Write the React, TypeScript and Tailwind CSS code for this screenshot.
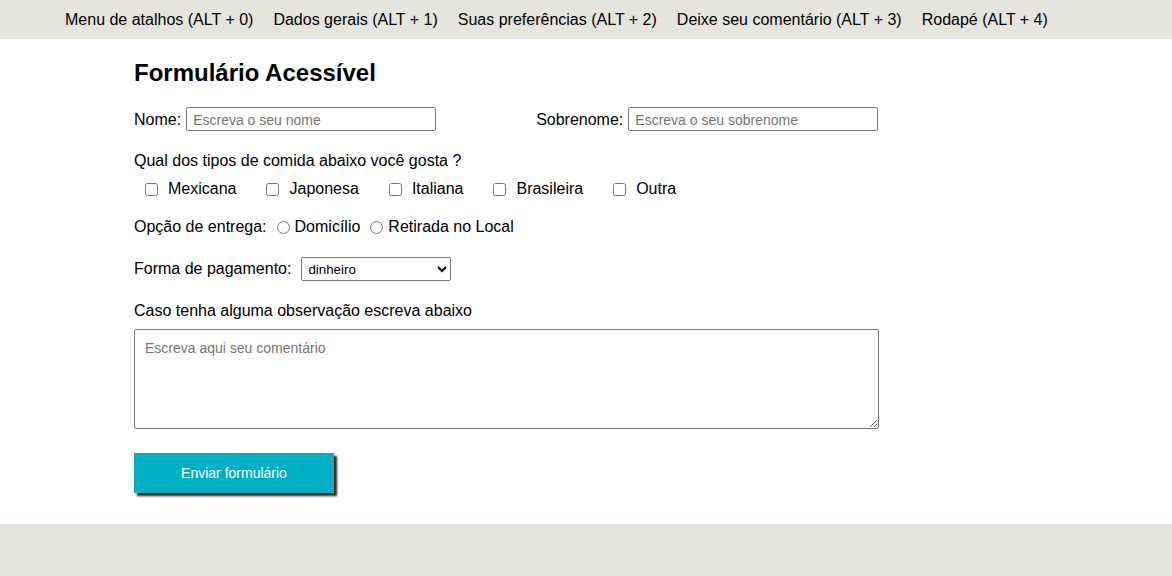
import React from "react";

export default function App() {
  const foods = ["Mexicana", "Japonesa", "Italiana", "Brasileira", "Outra"];
  return (
    <div className="min-h-[576px] flex flex-col bg-[#e5e5dd] text-black" style={{ fontFamily: '"Liberation Sans", Arial, sans-serif' }}>
      <nav className="h-[39px] flex items-center gap-[20px] pl-[65px] text-[16px] bg-[#e5e5dd]">
        <a>Menu de atalhos (ALT + 0)</a>
        <a>Dados gerais (ALT + 1)</a>
        <a>Suas preferências (ALT + 2)</a>
        <a>Deixe seu comentário (ALT + 3)</a>
        <a>Rodapé (ALT + 4)</a>
      </nav>
      <main className="bg-white h-[485px] pl-[134px] pt-[20px] text-[16px]">
        <h1 className="text-[24px] font-bold leading-[28px]">Formulário Acessível</h1>
        <div className="flex items-center mt-[20px] h-[24px]">
          <label className="mr-[5px] pt-[2px]">Nome:</label>
          <input
            className="w-[250px] h-[24px] border border-[#767676] rounded-[2px] px-[6px] pt-[1px] text-[14px] placeholder:text-[#757575] outline-none"
            placeholder="Escreva o seu nome"
          />
          <label className="ml-[100px] mr-[5px] pt-[2px]">Sobrenome:</label>
          <input
            className="w-[250px] h-[24px] border border-[#767676] rounded-[2px] px-[6px] pt-[1px] text-[14px] placeholder:text-[#757575] outline-none"
            placeholder="Escreva o seu sobrenome"
          />
        </div>
        <p className="mt-[19px] leading-[22px]">Qual dos tipos de comida abaixo você gosta ?</p>
        <div className="flex items-center mt-[6px] h-[22px]">
          {foods.map((f) => (
            <span key={f} className="flex items-center">
              <input type="checkbox" className="w-[13px] h-[13px] ml-[11px] mr-[10px]" />
              <label className="mr-[19px]">{f}</label>
            </span>
          ))}
        </div>
        <div className="flex items-center mt-[16px] h-[22px]">
          <label>Opção de entrega:</label>
          <input type="radio" name="e" className="w-[13px] h-[13px] ml-[10px] mr-[5px]" />
          <label>Domicílio</label>
          <input type="radio" name="e" className="w-[13px] h-[13px] ml-[10px] mr-[5px]" />
          <label>Retirada no Local</label>
        </div>
        <div className="flex items-center mt-[19px] h-[24px]">
          <label className="mr-[10px]">Forma de pagamento:</label>
          <select className="w-[150px] h-[24px] border border-[#767676] rounded-[2px] pl-[2px] text-[13.33px] bg-white">
            <option>dinheiro</option>
            <option>cartão</option>
          </select>
        </div>
        <p className="mt-[18px] leading-[22px] pt-[1px]">Caso tenha alguma observação escreva abaixo</p>
        <textarea
          className="block mt-[7px] w-[745px] h-[100px] border border-[#767676] rounded-[2px] px-[10px] py-[8px] text-[14px] placeholder:text-[#757575] outline-none"
          placeholder="Escreva aqui seu comentário"
        />
        <button className="mt-[24px] w-[200px] h-[40px] bg-[#00afc4] text-white text-[14px] shadow-[3px_3px_2px_#222]">
          Enviar formulário
        </button>
      </main>
      <footer className="flex-1 bg-[#e5e5dd]" />
    </div>
  );
}
